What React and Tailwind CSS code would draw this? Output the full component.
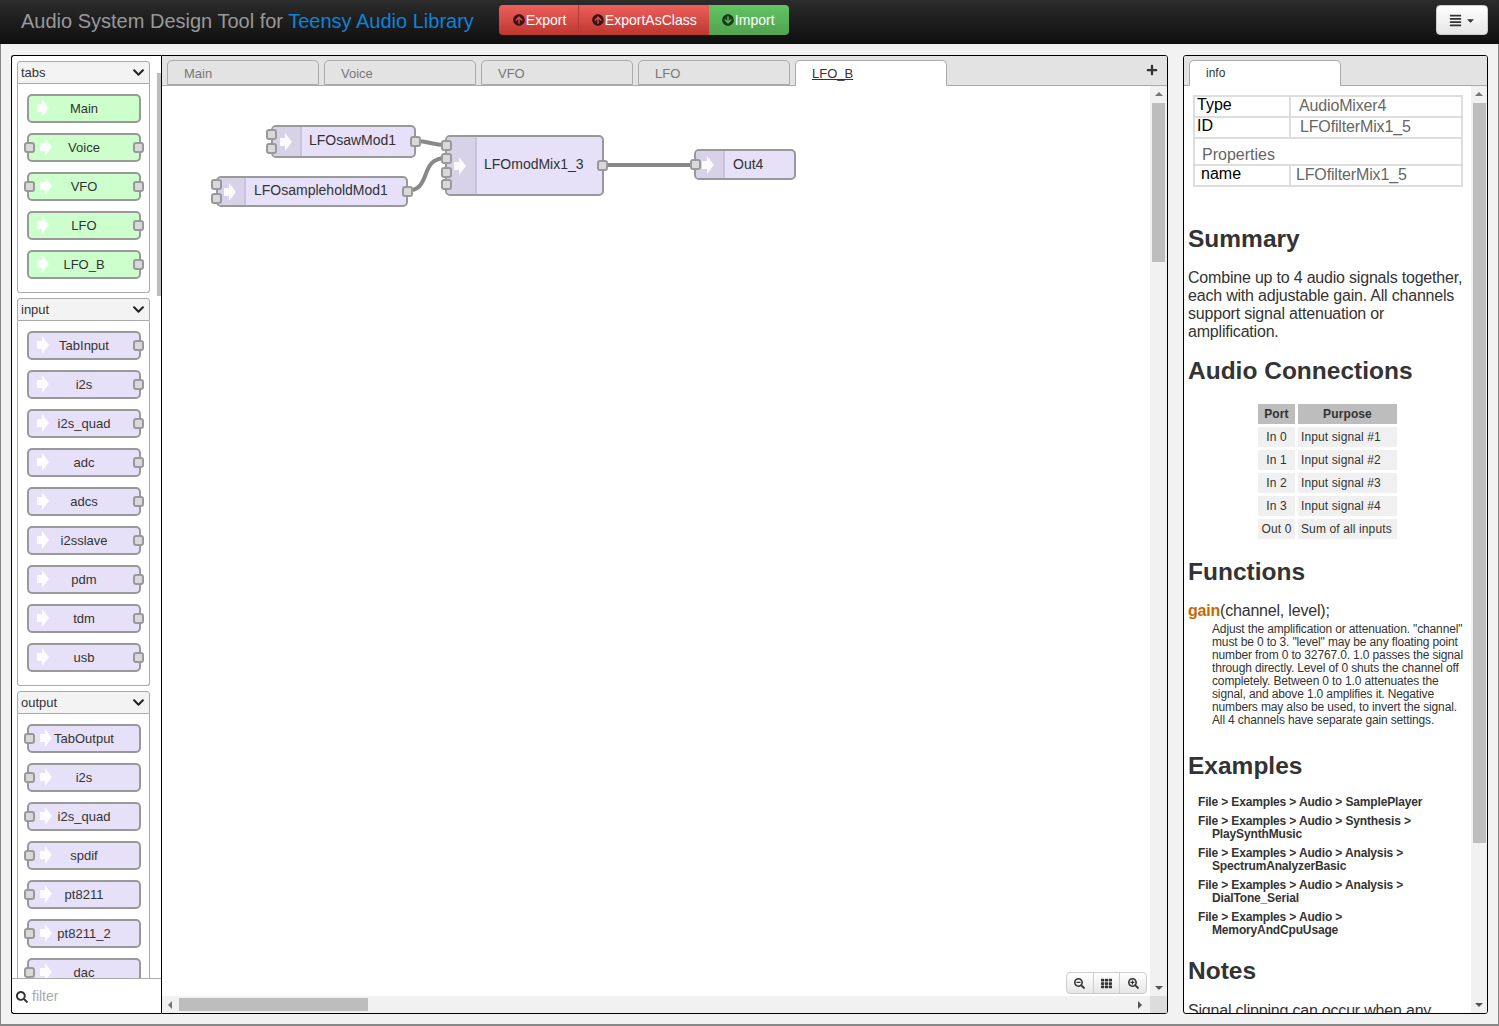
import React from 'react';
import { FaArrowCircleUp, FaArrowCircleDown, FaAlignJustify, FaCaretDown, FaChevronDown, FaPlus, FaSearch, FaSearchMinus, FaSearchPlus, FaTh } from 'react-icons/fa';

const categories = [
  {
    name: 'tabs',
    color: 'bg-[#ccffcc]',
    nodes: [
      { label: 'Main' },
      { label: 'Voice', input: true, output: true },
      { label: 'VFO', input: true, output: true },
      { label: 'LFO', output: true },
      { label: 'LFO_B', output: true },
    ],
  },
  {
    name: 'input',
    color: 'bg-[#e6e0f8]',
    nodes: ['TabInput', 'i2s', 'i2s_quad', 'adc', 'adcs', 'i2sslave', 'pdm', 'tdm', 'usb'].map((label) => ({ label, output: true })),
  },
  {
    name: 'output',
    color: 'bg-[#e6e0f8]',
    nodes: ['TabOutput', 'i2s', 'i2s_quad', 'spdif', 'pt8211', 'pt8211_2', 'dac'].map((label) => ({ label, input: true })),
  },
];

const tabs = ['Main', 'Voice', 'VFO', 'LFO'];

const connections = [
  ['In 0', 'Input signal #1'],
  ['In 1', 'Input signal #2'],
  ['In 2', 'Input signal #3'],
  ['In 3', 'Input signal #4'],
  ['Out 0', 'Sum of all inputs'],
];

const examples = [
  ['File > Examples > Audio > SamplePlayer'],
  ['File > Examples > Audio > Synthesis >', 'PlaySynthMusic'],
  ['File > Examples > Audio > Analysis >', 'SpectrumAnalyzerBasic'],
  ['File > Examples > Audio > Analysis >', 'DialTone_Serial'],
  ['File > Examples > Audio >', 'MemoryAndCpuUsage'],
];

const gainText = [
  'Adjust the amplification or attenuation. "channel"',
  'must be 0 to 3. "level" may be any floating point',
  'number from 0 to 32767.0. 1.0 passes the signal',
  'through directly. Level of 0 shuts the channel off',
  'completely. Between 0 to 1.0 attenuates the',
  'signal, and above 1.0 amplifies it. Negative',
  'numbers may also be used, to invert the signal.',
  'All 4 channels have separate gain settings.',
];

const summaryText = [
  'Combine up to 4 audio signals together,',
  'each with adjustable gain. All channels',
  'support signal attenuation or',
  'amplification.',
];

const Arrow = ({ className }) => (
  <svg className={className} width="12" height="18" viewBox="0 0 12 18">
    <path d="M0 5h5V0l7 9-7 9v-5H0z" fill="#fff" fillOpacity="0.9" />
  </svg>
);

const Port = ({ className }) => (
  <div className={`absolute w-[11px] h-[11px] rounded-[3px] bg-[#d9d9d9] border-2 border-[#999] ${className}`}></div>
);

const PaletteNode = ({ label, input, output, color }) => (
  <div className={`relative shrink-0 w-[114px] h-[29px] ml-[9px] rounded-[5px] border-2 border-[#999] ${color} flex items-center justify-center text-[13px] text-[#333]`}>
    {input && <Port className="-left-[5px] top-[7px]" />}
    <Arrow className={`absolute top-[3px] ${input ? 'left-[11px]' : 'left-[8px]'}`} />
    <span>{label}</span>
    {output && <Port className="-right-[5px] top-[7px]" />}
  </div>
);

const Category = ({ name, color, nodes }) => (
  <div className="w-[133px] shrink-0">
    <div className="h-[23px] px-[3px] rounded-t-[3px] border border-[#aaa] bg-[#f3f3f3] flex items-center justify-between text-[13px] text-[#333]">
      <span>{name}</span>
      <FaChevronDown className="text-[13px] text-[#222] mr-[1px]" />
    </div>
    <div className="border-x border-b border-[#aaa] bg-white pt-[10px] pb-[13px] flex flex-col gap-[10px] rounded-b-[3px]">
      {nodes.map((node) => (
        <PaletteNode key={node.label} color={color} {...node} />
      ))}
    </div>
  </div>
);

const Tab = ({ label, active }) => (
  <div className={`w-[152px] h-[25px] rounded-t-[5px] border border-[#aaa] pl-[16px] pt-[3px] text-[13px] ${active ? 'bg-white border-b-white -mb-px h-[26px] text-[#333]' : 'bg-[#e3e3e3] text-[#777]'}`}>
    {label}
  </div>
);

const CanvasNode = ({ label, className, dividerClass, arrowClass, textClass, children }) => (
  <div className={`absolute rounded-[5px] border-2 border-[#999] bg-[#e6e0f8] text-[14px] text-[#333] ${className}`}>
    <div className={`absolute left-0 top-0 bottom-0 bg-[#d8d2e8] border-r-2 border-[#c8c2da] rounded-l-[3px] ${dividerClass}`}></div>
    <Arrow className={`absolute ${arrowClass}`} />
    <span className={`absolute whitespace-nowrap ${textClass}`}>{label}</span>
    {children}
  </div>
);

const ScrollArrow = ({ dir }) => {
  const cls = {
    up: 'border-x-[4px] border-x-transparent border-b-[4px] border-b-[#777]',
    down: 'border-x-[4px] border-x-transparent border-t-[4px] border-t-[#555]',
    left: 'border-y-[4px] border-y-transparent border-r-[4px] border-r-[#777]',
    right: 'border-y-[4px] border-y-transparent border-l-[4px] border-l-[#555]',
  }[dir];
  return <div className={`w-0 h-0 ${cls}`}></div>;
};

const VScroll = ({ thumbClass, trackClass }) => (
  <div className={`w-[16px] shrink-0 bg-[#f1f1f1] flex flex-col items-center pt-[6px] ${trackClass}`}>
    <ScrollArrow dir="up" />
    <div className={`w-[13px] bg-[#bdbdbd] mt-[7px] ${thumbClass}`}></div>
    <div className="mt-auto mb-[6px]">
      <ScrollArrow dir="down" />
    </div>
  </div>
);

const Heading = ({ children, className }) => (
  <h3 className={`text-[24.5px] leading-[30px] font-bold text-[#333] ${className}`}>{children}</h3>
);

const ExportButton = ({ icon, label, className }) => (
  <div className={`h-[30px] flex items-center gap-[1px] text-[14px] text-white ${className}`}>
    {icon}
    <span>{label}</span>
  </div>
);

export default function App() {
  return (
    <div className="w-[1499px] h-[1026px] overflow-hidden flex flex-col bg-[#f2f2f2] font-['Liberation_Sans',Arial,sans-serif]">
      {/* navbar */}
      <div className="h-[44px] shrink-0 flex items-start bg-gradient-to-b from-[#2c2c2c] to-[#0f0f0f] pt-[5px] pl-[21px] pr-[11px]">
        <div className="text-[20px] leading-[30px] mt-[1px] text-[#999] whitespace-nowrap">
          Audio System Design Tool for <span className="text-[#0b83d9]">Teensy Audio Library</span>
        </div>
        <div className="flex ml-[25px] rounded-[4px] overflow-hidden">
          <ExportButton
            icon={<FaArrowCircleUp className="text-[12px] text-[#3a1515]" />}
            label="Export"
            className="w-[80px] pl-[14px] bg-gradient-to-b from-[#ee5f5b] to-[#bd362f] border-r border-[#b23a35]"
          />
          <ExportButton
            icon={<FaArrowCircleUp className="text-[12px] text-[#3a1515]" />}
            label="ExportAsClass"
            className="w-[130px] pl-[13px] bg-gradient-to-b from-[#ee5f5b] to-[#bd362f]"
          />
          <ExportButton
            icon={<FaArrowCircleDown className="text-[12px] text-[#153a15]" />}
            label="Import"
            className="w-[80px] pl-[13px] bg-gradient-to-b from-[#62c462] to-[#51a351]"
          />
        </div>
        <div className="ml-auto w-[52px] h-[30px] rounded-[4px] border border-[#ccc] bg-gradient-to-b from-white to-[#e6e6e6] flex items-center justify-center gap-[3px] text-[#333]">
          <FaAlignJustify className="text-[13px]" />
          <FaCaretDown className="text-[11px]" />
        </div>
      </div>

      {/* main area */}
      <div className="flex-1 min-h-0 flex pt-[11px] pb-[10px] pl-[10px] pr-[10px] border-x border-b-2 border-[#888]">
        {/* palette */}
        <div className="w-[150px] shrink-0 flex flex-col border border-black rounded-l-[3px] bg-white overflow-hidden border-r-0">
          <div className="flex-1 min-h-0 flex relative overflow-hidden">
            <div className="w-[145px] pl-[5px] pt-[5px] flex flex-col gap-[5px] overflow-hidden">
              {categories.map((c) => (
                <Category key={c.name} {...c} />
              ))}
            </div>
            <div className="w-[4px] h-[223px] mt-[17px] bg-[#bdbdbd]"></div>
          </div>
          <div className="h-[35px] shrink-0 border-t border-[#aaa] flex items-center pl-[4px] pt-[1px] gap-[4px] text-[14px] text-[#aaa]">
            <FaSearch className="text-[12px] text-[#333]" />
            <span>filter</span>
          </div>
        </div>

        {/* workspace */}
        <div className="w-[1007px] shrink-0 flex flex-col border border-black rounded-r-[3px] bg-white overflow-hidden">
          <div className="h-[30px] shrink-0 bg-[#e3e3e3] border-b border-[#aaa] flex items-end gap-[5px] pl-[5px] relative">
            {tabs.map((t) => (
              <Tab key={t} label={t} />
            ))}
            <Tab label={<span className="underline">LFO_B</span>} active />
            <FaPlus className="absolute right-[9px] top-[8px] text-[12px] text-[#333]" />
          </div>
          <div className="flex-1 min-h-0 flex">
            <div className="flex-1 relative overflow-hidden">
              <svg className="absolute left-0 top-0" width="700" height="130" fill="none" stroke="#888" strokeWidth="4">
                <path d="M253 55C269 55 268 59 284 59" />
                <path d="M244 105C271 105 256 72 284 72" />
                <path d="M441 79H534" />
              </svg>
              <CanvasNode label="LFOsawMod1" className="left-[109px] top-[39px] w-[145px] h-[33px]" dividerClass="w-[29px]" arrowClass="left-[7px] top-[6px]" textClass="left-[36px] top-[3px]">
                <Port className="-left-[7px] top-[2px]" />
                <Port className="-left-[7px] top-[16px]" />
                <Port className="-right-[7px] top-[9px]" />
              </CanvasNode>
              <CanvasNode label="LFOsampleholdMod1" className="left-[54px] top-[90px] w-[192px] h-[31px]" dividerClass="w-[28px]" arrowClass="left-[6px] top-[5px]" textClass="left-[36px] top-[2px]">
                <Port className="-left-[7px] top-[1px]" />
                <Port className="-left-[7px] top-[15px]" />
                <Port className="-right-[7px] top-[8px]" />
              </CanvasNode>
              <CanvasNode label="LFOmodMix1_3" className="left-[283px] top-[49px] w-[159px] h-[61px]" dividerClass="w-[30px]" arrowClass="left-[7px] top-[20px]" textClass="left-[37px] top-[17px]">
                <Port className="-left-[6px] top-[3px]" />
                <Port className="-left-[6px] top-[16px]" />
                <Port className="-left-[6px] top-[30px]" />
                <Port className="-left-[6px] top-[42px]" />
                <Port className="-right-[6px] top-[23px]" />
              </CanvasNode>
              <CanvasNode label="Out4" className="left-[532px] top-[63px] w-[102px] h-[31px]" dividerClass="w-[29px]" arrowClass="left-[6px] top-[5px]" textClass="left-[37px] top-[3px]">
                <Port className="-left-[6px] top-[8px]" />
              </CanvasNode>
              {/* zoom buttons */}
              <div className="absolute right-[3px] bottom-[2px] w-[81px] h-[22px] flex rounded-[4px] border border-[#ccc] bg-gradient-to-b from-white to-[#e6e6e6] text-[#333] text-[11px] divide-x divide-[#ccc]">
                <div className="flex-1 flex items-center justify-center"><FaSearchMinus /></div>
                <div className="flex-1 flex items-center justify-center"><FaTh /></div>
                <div className="flex-1 flex items-center justify-center"><FaSearchPlus /></div>
              </div>
            </div>
            <VScroll thumbClass="h-[159px]" trackClass="w-[17px]" />
          </div>
          <div className="h-[17px] shrink-0 flex items-center bg-[#f1f1f1]">
            <div className="ml-[6px]"><ScrollArrow dir="left" /></div>
            <div className="ml-[7px] w-[189px] h-[13px] bg-[#bdbdbd]"></div>
            <div className="ml-auto mr-[8px]"><ScrollArrow dir="right" /></div>
            <div className="w-[17px] h-[17px] bg-[#dcdcdc]"></div>
          </div>
        </div>

        {/* sidebar */}
        <div className="ml-[15px] w-[305px] shrink-0 flex flex-col border border-black rounded-[3px] bg-white overflow-hidden">
          <div className="h-[30px] shrink-0 bg-[#e3e3e3] border-b border-[#aaa] flex items-end pl-[5px]">
            <div className="w-[152px] h-[26px] -mb-px rounded-t-[5px] border border-[#aaa] border-b-white bg-white pl-[16px] pt-[3px] text-[12px] text-[#333]">info</div>
          </div>
          <div className="flex-1 min-h-0 flex">
            <div className="flex-1 overflow-hidden pl-[4px] text-[#333]">
              <div className="ml-[5px] mt-[9px] w-[270px] border-2 border-[#ddd] border-b-0 text-[16px] leading-[18px]">
                <div className="h-[21px] flex border-b-2 border-[#ddd]">
                  <div className="w-[96px] pl-[2px] -mt-[1px] text-black border-r-2 border-[#ddd]">Type</div>
                  <div className="pl-[8px] text-[#666] tracking-[-0.15px]">AudioMixer4</div>
                </div>
                <div className="h-[21px] flex border-b-2 border-[#ddd]">
                  <div className="w-[96px] pl-[2px] -mt-[1px] text-black border-r-2 border-[#ddd]">ID</div>
                  <div className="pl-[9px] text-[#666] tracking-[-0.15px]">LFOfilterMix1_5</div>
                </div>
                <div className="h-[27px] pl-[7px] pt-[7px] text-[#666] border-b-2 border-[#ddd]">Properties</div>
                <div className="h-[21px] flex border-b-2 border-[#ddd]">
                  <div className="w-[96px] pl-[6px] -mt-[1px] text-black border-r-2 border-[#ddd]">name</div>
                  <div className="pl-[5px] text-[#666] tracking-[-0.15px]">LFOfilterMix1_5</div>
                </div>
              </div>

              <Heading className="mt-[37px]">Summary</Heading>
              <p className="mt-[15px] text-[16px] leading-[18px] tracking-[-0.2px] whitespace-nowrap">
                {summaryText.map((line) => (
                  <span key={line} className="block">{line}</span>
                ))}
              </p>

              <Heading className="mt-[15px]">Audio Connections</Heading>
              <table className="ml-[67px] mt-[15px] border-separate border-spacing-[3px] text-[12px] leading-[20px] tracking-[0.12px]">
                <thead>
                  <tr className="bg-[#bdbdbd] font-bold">
                    <th className="w-[37px] p-0 font-bold">Port</th>
                    <th className="w-[99px] p-0 font-bold">Purpose</th>
                  </tr>
                </thead>
                <tbody>
                  {connections.map(([port, purpose]) => (
                    <tr key={port} className="bg-[#f0f0f0]">
                      <td className="p-0 text-center">{port}</td>
                      <td className="p-0 pl-[3px]">{purpose}</td>
                    </tr>
                  ))}
                </tbody>
              </table>

              <Heading className="mt-[15px]">Functions</Heading>
              <p className="mt-[15px] text-[16px] leading-[18px] tracking-[-0.2px]">
                <span className="font-bold text-[#c60]">gain</span>(channel, level);
              </p>
              <p className="ml-[24px] mt-[3px] text-[12px] leading-[13px] tracking-[-0.14px] whitespace-nowrap">
                {gainText.map((line) => (
                  <span key={line} className="block">{line}</span>
                ))}
              </p>

              <Heading className="mt-[24px]">Examples</Heading>
              <div className="mt-[15px] ml-[10px] flex flex-col gap-[6px] text-[12px] leading-[13px] font-bold tracking-[-0.15px]">
                {examples.map((lines) => (
                  <div key={lines[0] + lines[1]}>
                    <div>{lines[0]}</div>
                    {lines[1] && <div className="ml-[14px]">{lines[1]}</div>}
                  </div>
                ))}
              </div>

              <Heading className="mt-[19px]">Notes</Heading>
              <p className="mt-[16px] text-[16px] leading-[18px] tracking-[-0.2px] whitespace-nowrap">
                Signal clipping can occur when any
              </p>
            </div>
            <VScroll thumbClass="h-[740px]" trackClass="" />
          </div>
        </div>
      </div>
    </div>
  );
}
